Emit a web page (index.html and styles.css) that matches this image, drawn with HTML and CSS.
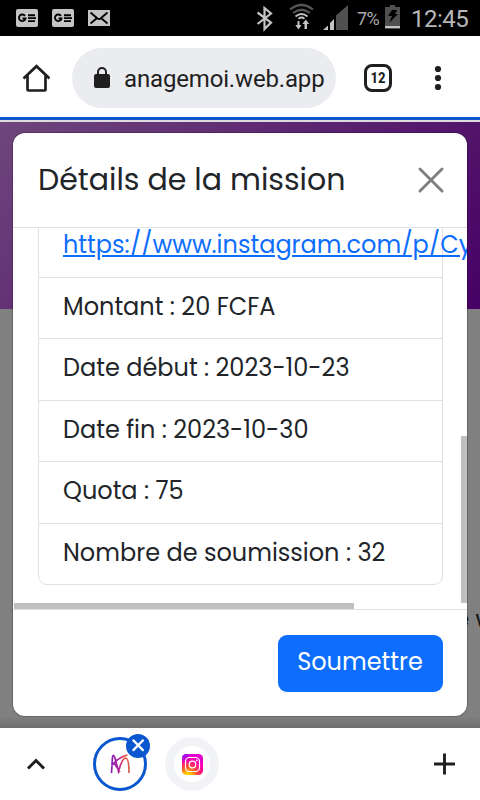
FILE: index.html
```html
<!DOCTYPE html>
<html lang="fr">
<head>
<meta charset="utf-8">
<title>Détails de la mission</title>
<link rel="stylesheet" href="styles.css">
</head>
<body>
<div class="screen">
  <header class="status">
    <svg class="status-art" width="360" height="36" viewBox="0 0 360 36">
      <g fill="#c4c4c4"><rect x="16" y="9" width="22" height="18" rx="2"/><rect x="52" y="9" width="22" height="18" rx="2"/><rect x="88" y="10" width="22" height="16"/></g>
      <g fill="none" stroke="#000" stroke-width="1.9">
        <path id="ge" d="M25 15.900a3.300 3.300 0 1 0 .5 2.600h-3M28 15.200h7M28 18.100h8M28 21.100h7"/>
        <use href="#ge" x="36"/>
        <path d="M90.500 12.500l7 6q1.500 1 3 0l7-6M90.500 23.500l6-5M107.500 23.500l-6-5"/>
      </g>
      <path d="M257.500 12.500l13.500 10-6.500 6.500V8l6.500 5.500-13.500 10.500" fill="none" stroke="#c4c4c4" stroke-width="2.200"/>
      <g fill="none" stroke-width="2.200">
        <path d="M290 9.500q11.500-9 23 0M293 13q8.500-6.500 17 0" stroke="#555"/>
        <path d="M295.500 16.500q6-5 12 0M298.500 18.800q3-2.500 6 0" stroke="#c4c4c4" stroke-width="1.800"/>
      </g>
      <path d="M297.500 21h2v4h2l-3 4.500-3.200-4.500h2.200zM304.500 29h2.500v-5h2.200l-3.400-4.500-3.500 4.500h2.200z" fill="#c4c4c4"/>
      <path d="M336 30V15.500L348 5v25z" fill="#505050"/>
      <path d="M323 30l5-4.500V30zM330 30v-7l4-4v11z" fill="#c4c4c4"/>
    </svg>
    <span class="percent">7%</span>
    <svg class="battery" width="16" height="24" viewBox="0 0 16 24"><path d="M5 0h5v2h5v22H0V2h5z" fill="#505050"/><path d="M0 21h15v2H0z" fill="#c4c4c4"/><path d="M7 5h5l-2 4h3L4 18l3-7H3z" fill="#000"/></svg>
    <span class="clock">12:45</span>
  </header>

  <nav class="toolbar">
    <svg class="home" width="28" height="28" viewBox="0 0 28 28"><path d="M1.500 14.500L14.500 2.200l13 12.300M5.500 11.500v14.200q0 .8.800.8h16.400q.8 0 .8-.8V11.500" fill="none" stroke="#1f1f1f" stroke-width="2.700"/></svg>
    <div class="address">
      <svg class="lock" width="16" height="22" viewBox="0 0 16 22"><rect y="7" width="16" height="14" rx="2" fill="#1f1f1f"/><path d="M4 8V5a4 4 0 0 1 8 0v3" fill="none" stroke="#1f1f1f" stroke-width="2"/></svg>
      <div class="url"><span>anagemoi.web.app</span></div>
    </div>
    <div class="tabs">12</div>
    <svg class="dots" width="8" height="26" viewBox="0 0 8 26"><g fill="#1f1f1f"><circle cx="4" cy="4" r="3.100"/><circle cx="4" cy="13" r="3.100"/><circle cx="4" cy="22" r="3.100"/></g></svg>
  </nav>
  <div class="progress"></div>

  <main class="page">
    <div class="banner"></div>
    <p class="page-text">e w</p>
    <section class="modal">
      <div class="modal-header">
        <h1>Détails de la mission</h1>
        <svg width="26" height="26" viewBox="0 0 26 26"><path d="M2 2l22 22M24 2L2 24" stroke="#7f7f7f" stroke-width="2.900" stroke-linecap="round"/></svg>
      </div>
      <div class="modal-body">
        <ul class="list">
          <li class="link-row"><a class="link">https://www.instagram.com/p/Cy</a></li>
          <li>Montant : 20 FCFA</li>
          <li>Date début : 2023-10-23</li>
          <li>Date fin : 2023-10-30</li>
          <li>Quota : 75</li>
          <li>Nombre de soumission : 32</li>
        </ul>
        <div class="bar-v"></div>
        <div class="bar-h"></div>
      </div>
      <div class="modal-footer"><button>Soumettre</button></div>
    </section>
  </main>

  <footer class="bottom">
    <svg class="chevron" width="20" height="14" viewBox="0 0 20 14"><path d="M2 11.500l8-8 8 8" fill="none" stroke="#1f1f1f" stroke-width="2.900"/></svg>
    <div class="tab active">
      <svg width="20" height="20" viewBox="0 0 20 20"><defs><linearGradient id="brand" gradientUnits="userSpaceOnUse" x1="1" y1="0" x2="19" y2="0"><stop stop-color="#8420b2"/><stop offset=".45" stop-color="#b5219d"/><stop offset=".75" stop-color="#ed4638"/><stop offset="1" stop-color="#d65c4c"/></linearGradient></defs><path d="M1.500 19L2.500 3Q3.500-.5 5 4L8.500 17.500Q12 4.500 15.500 4 19 4 19 19M1.500 11.500Q5 8.500 7 5.500M4 9l6 9M5 8Q11 2.500 17.500 1" fill="none" stroke="url(#brand)" stroke-width="1.700"/></svg>
      <svg class="close" width="24" height="24" viewBox="0 0 24 24"><circle cx="12" cy="12" r="12" fill="#0b57d0"/><path d="M7.500 6.500l9.300 9.500M16.800 6.500l-9.300 9.500" stroke="#fff" stroke-width="2.500" stroke-linecap="round"/></svg>
    </div>
    <div class="tab insta">
      <svg width="21" height="21" viewBox="0 0 21 21"><defs><radialGradient id="ig" cx=".27" cy="1.08" r="1.05"><stop stop-color="#ffd500"/><stop offset=".18" stop-color="#ffc400"/><stop offset=".48" stop-color="#ff433b"/><stop offset=".75" stop-color="#ff00a8"/><stop offset="1" stop-color="#e400d0"/></radialGradient><radialGradient id="violet" cx="0" cy="0" r=".5"><stop stop-color="#7024ff"/><stop offset="1" stop-color="#a000ff" stop-opacity="0"/></radialGradient></defs><rect width="21" height="21" rx="4.500" fill="url(#ig)"/><rect width="21" height="21" rx="4.500" fill="url(#violet)"/><g fill="none" stroke="#fff" stroke-width="1.200"><rect x="3.500" y="3.500" width="14" height="14" rx="4"/><circle cx="10.500" cy="10.500" r="3.300"/></g><circle cx="14.700" cy="6.300" r=".9" fill="#fff"/></svg>
    </div>
    <svg class="plus" width="22" height="22" viewBox="0 0 22 22"><path d="M0 11h21M10.500 .5v21" stroke="#1f1f1f" stroke-width="2.900"/></svg>
  </footer>
</div>
</body>
</html>
```

FILE: styles.css
```css
* { box-sizing: border-box; }
body { margin: 0; font-family: Poppins, Inter, "Open Sans", sans-serif; color: #212529; }
svg { display: block; flex: none; }
.screen { width: 480px; height: 800px; display: flex; flex-direction: column; overflow: hidden; background: #fff; }
.status { height: 36px; flex: none; background: #000; display: flex; font-family: Roboto, sans-serif; color: #c4c4c4; }
.status-art { width: 360px; margin-right: -3px; }
.percent { width: 28px; font-size: 18px; line-height: 38px; letter-spacing: -.5px; color: #aaa; }
.battery { margin-top: 5px; }
.clock { margin-left: 10px; font-size: 24px; line-height: 38px; letter-spacing: -.5px; white-space: nowrap; color: #b8b8b8; }
.toolbar { height: 81px; flex: none; display: flex; align-items: center; padding-top: 3px; }
.home { margin-left: 22px; }
.address { width: 264px; height: 60px; margin-left: 22px; border-radius: 30px; background: #ebecf0; display: flex; align-items: center; padding-left: 22px; }
.url { width: 201px; height: 36px; margin-left: 14px; font: 24px/38px Roboto, sans-serif; letter-spacing: -.16px; white-space: nowrap; color: #1f1f1f; }
.tabs { width: 28px; height: 28px; margin-left: 28px; border: 3px solid #1f1f1f; border-radius: 8px; font: bold 15px/23px "Roboto Condensed", Roboto, sans-serif; text-align: center; color: #1f1f1f; }
.dots { margin-left: 42px; }
.progress { height: 5px; flex: none; background: #0b57d0; border-bottom: 2px solid #dcdcdf; }
.page { height: 606px; flex: none; position: relative; padding: 11px 13px 12px; background: #808080; overflow: hidden; }
.page::after { content: ""; position: absolute; inset: auto 0 0; height: 12px; background: linear-gradient(transparent, #0002); }
.banner { position: absolute; inset: 0 0 auto; height: 187px; background: linear-gradient(135deg, #6e467c, #470064); }
.page-text { position: absolute; left: 455px; top: 484px; margin: 0; font-size: 23px; line-height: 26px; white-space: nowrap; color: #111; }
.modal { position: relative; width: 454px; height: 583px; display: flex; flex-direction: column; background: #fff; border-radius: 12px; overflow: hidden; box-shadow: 0 0 0 1px #0003; }
.modal-header { height: 95px; flex: none; padding: 0 23px 0 25px; display: flex; align-items: center; justify-content: space-between; border-bottom: 1px solid #dee2e6; }
h1 { margin: 0; padding-bottom: 2px; font-size: 30px; font-weight: 400; line-height: 45px; white-space: nowrap; }
.modal-body { position: relative; height: 381px; flex: none; padding: 0 24px 24px 25px; display: flex; flex-direction: column; justify-content: flex-end; overflow: hidden; }
.list { flex: none; margin: 0; padding: 0; list-style: none; border: 1px solid #dee2e6; border-radius: 9px; }
.list li { height: 61.4px; padding: 11px 24px; font-size: 24px; font-weight: 400; line-height: 36px; white-space: nowrap; border-top: 1px solid #dee2e6; }
.list .link-row { padding-top: 10px; }
.link { color: #0d6efd; text-decoration: underline; }
.bar-v { position: absolute; right: 0; top: 208px; width: 6px; height: 167px; background: #bfbfbf; }
.bar-h { position: absolute; left: 1px; bottom: 0; width: 340px; height: 6px; background: #bfbfbf; }
.modal-footer { flex: 1; border-top: 1px solid #dee2e6; padding: 25px 24px 0; display: flex; justify-content: flex-end; align-items: flex-start; }
button { width: 165px; height: 57px; border: 0; border-radius: 9px; background: #0d6efd; color: #fff; font: 400 24px/36px Poppins, Inter, "Open Sans", sans-serif; padding: 0 1px 4px 0; }
.bottom { height: 72px; flex: none; display: flex; align-items: center; }
.chevron { margin-left: 26px; }
.tab { width: 54px; height: 54px; flex: none; border-radius: 50%; display: flex; align-items: center; justify-content: center; }
.active { position: relative; margin-left: 47px; border: 3px solid #0b57d0; }
.close { position: absolute; left: 30px; top: -6px; }
.insta { margin-left: 18px; border: 9px solid #f2f3f6; }
.plus { margin-left: 215px; }
```
